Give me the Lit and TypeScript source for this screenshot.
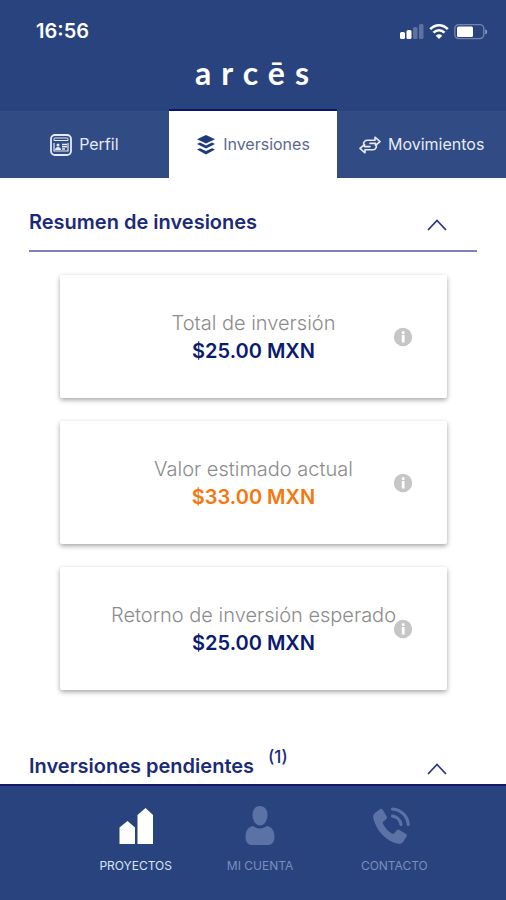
import { LitElement, html, css } from "lit";
import { customElement, property, state } from "lit/decorators.js";
import { classMap } from "lit/directives/class-map.js";

const statusIcons = html`
  <svg width="88" height="20" viewBox="0 0 88 20" role="img" aria-label="Señal, wifi y batería">
    <g fill="#fff">
      <rect x="0" y="11" width="5" height="7" rx="1.5" />
      <rect x="6.5" y="9" width="5" height="9" rx="1.5" />
      <rect x="13" y="6" width="4.5" height="12" rx="1.5" opacity=".25" />
      <rect x="19" y="3" width="4.5" height="15" rx="1.5" opacity=".25" />
    </g>
    <g fill="none" stroke="#fff" stroke-width="2.6">
      <path d="M30.2 8.2c5.200-5.300 12.400-5.300 17.600 0" />
      <path d="M33.5 11.7c3.300-3.300 7.700-3.300 11 0" />
    </g>
    <path d="M39 18l-3.200-3.300c1.900-1.800 4.500-1.800 6.400 0z" fill="#fff" />
    <rect x="54.800" y="3.6" width="29" height="14" rx="4" fill="none" stroke="#fff" stroke-opacity=".35" stroke-width="1.4" />
    <rect x="57" y="5.500" width="16" height="10.5" rx="1.5" fill="#fff" />
    <path d="M85.300 8.200c2.400.9 2.400 4.300 0 5.200z" fill="#fff" opacity=".5" />
  </svg>
`;

const profileIcon = html`
  <svg width="22" height="22" viewBox="0 0 22 22" aria-hidden="true" fill="none" stroke="currentColor">
    <rect x="1" y="1" width="20" height="20" rx="4" stroke-width="1.8" />
    <path d="M4 6.500h14M4 9v8h14V9" stroke-width="1.2" />
    <path d="M4 6.500V5q0-1 1-1h12q1 0 1 1v1.500" stroke-width="1" />
    <circle cx="8" cy="11" r="1.5" fill="currentColor" stroke="none" />
    <path d="M5 16c0-4 6-4 6 0z" fill="currentColor" stroke="none" />
    <path d="M12 10.500h5M12 12.800h5M12 15h3" stroke-width="1.5" />
  </svg>
`;

const layersIcon = html`
  <svg width="20" height="22" viewBox="0 0 20 22" aria-hidden="true" fill="currentColor">
    <path d="M10 1l9 4.200-9 4.300-9-4.300z" />
    <path d="M1 10l3-1.400 6 2.900 6-2.900 3 1.400-9 4.600z" />
    <path d="M1 15.600l3-1.400 6 2.900 6-2.900 3 1.400-9 4.800z" />
  </svg>
`;

const transferIcon = html`
  <svg width="22" height="18" viewBox="0 0 22 18" aria-hidden="true" fill="none" stroke="currentColor" stroke-width="1.6" stroke-linejoin="round" stroke-linecap="round">
    <path d="M4.500 8C4.800 5.400 6.300 4.200 8.500 4.200H16V1.200L21 5.600 16.500 9.400V7.400H11" />
    <path d="M17.500 10C17.200 12.600 15.700 13.800 13.500 13.800H6V16.800L1 12.400 5.500 8.600V10.600H11" />
  </svg>
`;

const projectsIcon = html`
  <svg width="40" height="40" viewBox="0 0 40 40" aria-hidden="true" fill="currentColor">
    <path d="M3.500 38V21.500L11.500 15l7.500 6.500V38z" />
    <path d="M21.500 38V9L29.500 2 37 9v29z" />
  </svg>
`;

const accountIcon = html`
  <svg width="38" height="40" viewBox="2 0 38 40" aria-hidden="true" fill="currentColor">
    <path d="M21 0c4.600 0 7.500 3.600 7.500 8.800 0 6.200-3.400 10.700-7.500 10.700s-7.500-4.500-7.500-10.700C13.500 3.600 16.400 0 21 0z" />
    <path d="M14 20c4.500 3.300 9.500 3.300 14 0 5 .8 7.500 5 7.500 11 0 5.300-2.500 8-6.500 8H13c-4 0-6.500-2.700-6.500-8 0-6 2.500-10.200 7.500-11z" />
  </svg>
`;

const contactIcon = html`
  <svg width="44" height="40" viewBox="0 0 44 40" aria-hidden="true">
    <path fill="currentColor" d="M3.500 6.500L8 3.200c1-.6 2-.4 2.700.6l4 6.700c.6 1 .3 2-.5 2.700l-2.800 2.300c-.7.700-.7 1.500-.3 2.400 2 4 5 7.300 8.800 9.700.9.500 1.700.4 2.300-.3l2.600-3c.7-.8 1.700-1 2.700-.4l6.500 4c1 .6 1.200 1.600.6 2.600l-3.200 5c-1.200 1.800-3.200 2.800-5.400 2.300C13.700 35 4.600 25 1.300 12.500c-.6-2.400.3-4.600 2.200-6z" />
    <g fill="none" stroke="currentColor" stroke-width="3.2" stroke-linecap="round">
      <path d="M20.500 3c8.500.5 15.300 7.500 15.700 15.500" />
      <path d="M20.500 10.200c4.500.5 7.800 4 8.500 8.300" />
    </g>
  </svg>
`;

const infoIcon = html`
  <svg width="20" height="20" viewBox="0 0 20 20" aria-hidden="true">
    <circle cx="10" cy="10" r="9.200" fill="#c6c6c6" />
    <rect x="8.800" y="4.300" width="2.800" height="2.600" rx=".6" fill="#fff" />
    <rect x="8.800" y="8" width="2.800" height="7.600" rx=".6" fill="#fff" />
  </svg>
`;

const chevronIcon = html`
  <svg class="chevron" width="20" height="12" viewBox="0 0 20 12" aria-hidden="true">
    <path d="M1 11L10 1.500 19 11" fill="none" stroke="#2c3780" stroke-width="1.8" />
  </svg>
`;

@customElement("summary-card")
class SummaryCard extends LitElement {
  @property() label = "";
  @property() amount = "";
  @property({ type: Boolean }) highlight = false;

  static styles = css`
    :host {
      display: block;
    }
    .card {
      position: relative;
      box-sizing: border-box;
      padding: 36px 16px 31px;
      text-align: center;
      background: #fff;
      border-radius: 2px;
      box-shadow: 0 2px 5px rgba(0, 0, 0, 0.36);
    }
    .label,
    .amount {
      margin: 0;
      font-size: 20px;
      white-space: nowrap;
    }
    .label {
      line-height: 24px;
      font-weight: 300;
      color: #8c8c8c;
    }
    .amount {
      line-height: 32px;
      font-weight: 600;
      color: #0b1b72;
    }
    .highlight {
      color: #f5770f;
    }
    .info {
      position: absolute;
      top: 50%;
      right: 34px;
      display: flex;
      margin-top: -10px;
      padding: 0;
      border: 0;
      background: none;
      cursor: pointer;
    }
  `;

  render() {
    return html`
      <article class="card">
        <p class="label">${this.label}</p>
        <p class=${classMap({ amount: true, highlight: this.highlight })}>${this.amount}</p>
        <button class="info" type="button" aria-label="Información: ${this.label}">${infoIcon}</button>
      </article>
    `;
  }
}

@customElement("app-root")
class AppRoot extends LitElement {
  @state() private tab = "Inversiones";
  @state() private open = true;

  private tabs = [
    { name: "Perfil", icon: profileIcon },
    { name: "Inversiones", icon: layersIcon },
    { name: "Movimientos", icon: transferIcon },
  ];

  private cards = [
    { label: "Total de inversión", amount: "$25.00 MXN", highlight: false },
    { label: "Valor estimado actual", amount: "$33.00 MXN", highlight: true },
    { label: "Retorno de inversión esperado", amount: "$25.00 MXN", highlight: false },
  ];

  private links = [
    { name: "PROYECTOS", icon: projectsIcon, current: true },
    { name: "MI CUENTA", icon: accountIcon, current: false },
    { name: "CONTACTO", icon: contactIcon, current: false },
  ];

  static styles = css`
    :host {
      display: flex;
      flex-direction: column;
      height: 100vh;
      overflow: hidden;
      background: #fff;
      font-family: Inter, "Liberation Sans", sans-serif;
      color: #1b2a78;
    }
    .top {
      flex: none;
      background: #29437f;
      color: #fff;
    }
    .status {
      display: flex;
      justify-content: space-between;
      align-items: center;
      padding: 19px 18px 0 36px;
    }
    .time {
      font-size: 20px;
      line-height: 24px;
      font-weight: 600;
    }
    .brand {
      margin: 0;
      padding: 10px 0 18px 8px;
      text-align: center;
      font-family: Lato, Inter, sans-serif;
      font-size: 32px;
      line-height: 40px;
      font-weight: 700;
      letter-spacing: 10px;
    }
    .tabs {
      flex: none;
      display: grid;
      grid-template-columns: repeat(3, 1fr);
      background: #314b84;
    }
    .tab {
      display: flex;
      align-items: center;
      justify-content: center;
      gap: 7px;
      padding: 0;
      border: 0;
      background: none;
      font: inherit;
      font-size: 16px;
      line-height: 67px;
      color: #e6eaf4;
      cursor: pointer;
    }
    .tab.active {
      background: #fff;
      color: #5c6890;
      box-shadow: 0 -2px 0 #0b1670;
    }
    .tab.active svg {
      color: #1f3a7c;
    }
    .content {
      flex: 1;
      min-height: 0;
      overflow: hidden;
      padding: 24px 29px 0;
    }
    .heading {
      display: flex;
      align-items: center;
      box-sizing: border-box;
      width: 100%;
      padding: 0 30px 0 0;
      border: 0;
      background: none;
      font: inherit;
      font-size: 20px;
      line-height: 40px;
      font-weight: 600;
      color: #1b2a78;
      text-align: left;
      cursor: pointer;
    }
    .first {
      padding-bottom: 8px;
      border-bottom: 2px solid #7f80b8;
    }
    .count {
      align-self: flex-start;
      margin-left: 14px;
      font-size: 17px;
      line-height: 22px;
      font-weight: 500;
    }
    .chevron {
      margin-left: auto;
      padding-top: 6px;
    }
    .cards {
      display: grid;
      gap: 23px;
      padding: 23px 30px 56px 31px;
    }
    .bottom {
      flex: none;
      display: grid;
      grid-template-columns: 12fr 13fr 14fr;
      padding: 20px 42px 26px 76px;
      border-top: 2px solid #15196b;
      background: #29437f;
    }
    .link {
      display: flex;
      flex-direction: column;
      align-items: center;
      gap: 12px;
      font-size: 12px;
      line-height: 16px;
      color: #7a8fbc;
      text-decoration: none;
      white-space: nowrap;
    }
    .link svg {
      color: #5a72a6;
    }
    .link.current {
      color: #dce3f1;
    }
    .link.current svg {
      color: #fff;
    }
  `;

  render() {
    return html`
      <header class="top">
        <div class="status"><span class="time">16:56</span>${statusIcons}</div>
        <h1 class="brand">arcēs</h1>
      </header>
      <nav class="tabs" role="tablist">
        ${this.tabs.map(
          (t) => html`
            <button
              type="button"
              role="tab"
              aria-selected=${t.name === this.tab}
              class=${classMap({ tab: true, active: t.name === this.tab })}
              @click=${() => (this.tab = t.name)}
            >${t.icon}<span>${t.name}</span></button>
          `,
        )}
      </nav>
      <main class="content">
        <button class="heading first" type="button" aria-expanded=${this.open} @click=${() => (this.open = !this.open)}>
          <span>Resumen de invesiones</span>${chevronIcon}
        </button>
        ${this.open
          ? html`<div class="cards">
              ${this.cards.map(
                (c) => html`<summary-card .label=${c.label} .amount=${c.amount} .highlight=${c.highlight}></summary-card>`,
              )}
            </div>`
          : null}
        <button class="heading" type="button" aria-expanded="true">
          <span>Inversiones pendientes</span><span class="count">(1)</span>${chevronIcon}
        </button>
      </main>
      <nav class="bottom">
        ${this.links.map(
          (l) => html`<a href="#" class=${classMap({ link: true, current: l.current })}>${l.icon}<span>${l.name}</span></a>`,
        )}
      </nav>
    `;
  }
}
